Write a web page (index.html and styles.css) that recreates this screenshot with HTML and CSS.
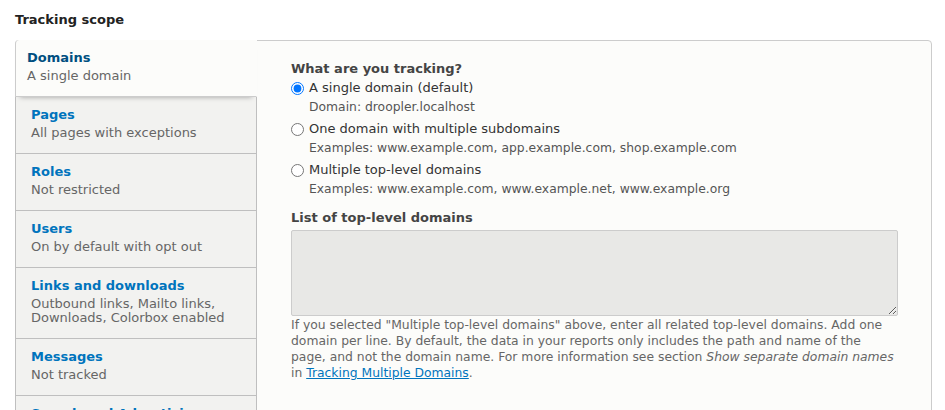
FILE: index.html
```html
<!DOCTYPE html>
<html lang="en">
<head>
    <meta charset="UTF-8">
    <meta name="viewport" content="width=device-width, initial-scale=1.0">
    <title>Tracking scope</title>
    <link rel="stylesheet" href="styles.css">
</head>
<body>
    <h4 class="scope-title">Tracking scope</h4>

    <div class="vtabs">
        <ul class="vtabs-menu">
            <li class="vtab is-selected">
                <a href="#">
                    <strong class="vtab-title">Domains</strong>
                    <span class="vtab-summary">A single domain</span>
                </a>
            </li>
            <li class="vtab">
                <a href="#">
                    <strong class="vtab-title">Pages</strong>
                    <span class="vtab-summary">All pages with exceptions</span>
                </a>
            </li>
            <li class="vtab">
                <a href="#">
                    <strong class="vtab-title">Roles</strong>
                    <span class="vtab-summary">Not restricted</span>
                </a>
            </li>
            <li class="vtab">
                <a href="#">
                    <strong class="vtab-title">Users</strong>
                    <span class="vtab-summary">On by default with opt out</span>
                </a>
            </li>
            <li class="vtab">
                <a href="#">
                    <strong class="vtab-title">Links and downloads</strong>
                    <span class="vtab-summary">Outbound links, Mailto links,<br>Downloads, Colorbox enabled</span>
                </a>
            </li>
            <li class="vtab">
                <a href="#">
                    <strong class="vtab-title">Messages</strong>
                    <span class="vtab-summary">Not tracked</span>
                </a>
            </li>
            <li class="vtab">
                <a href="#">
                    <strong class="vtab-title">Search and Advertising</strong>
                    <span class="vtab-summary">Site search enabled</span>
                </a>
            </li>
        </ul>

        <div class="vtabs-pane">
            <div class="field-label">What are you tracking?</div>

            <div class="radio-item">
                <label><input type="radio" name="domain_mode" checked> A single domain (default)</label>
                <div class="radio-desc">Domain: droopler.localhost</div>
            </div>
            <div class="radio-item">
                <label><input type="radio" name="domain_mode"> One domain with multiple subdomains</label>
                <div class="radio-desc">Examples: www.example.com, app.example.com, shop.example.com</div>
            </div>
            <div class="radio-item">
                <label><input type="radio" name="domain_mode"> Multiple top-level domains</label>
                <div class="radio-desc">Examples: www.example.com, www.example.net, www.example.org</div>
            </div>

            <div class="field-label list-label">List of top-level domains</div>
            <textarea class="domains-input" disabled></textarea>
            <div class="help">
                If you selected "Multiple top-level domains" above, enter all related top-level domains. Add one
                domain per line. By default, the data in your reports only includes the path and name of the
                page, and not the domain name. For more information see section <em>Show separate domain names</em>
                in <a href="#">Tracking Multiple Domains</a>.
            </div>
        </div>
    </div>
</body>
</html>
```

FILE: styles.css
```css
body {
    margin: 0;
    padding: 0 13px 0 15px;
    background: #fff;
    color: #333;
    font-family: "DejaVu Sans", sans-serif;
    font-size: 13px;
}

.scope-title {
    margin: 0;
    padding-top: 11px;
    height: 29px;
    font-size: 13px;
    line-height: 18px;
    color: #222;
}

.vtabs {
    border: 1px solid #ccc;
    border-radius: 4px;
    background: #fcfcfa;
    display: flex;
    align-items: flex-start;
}

.vtabs-menu {
    width: 242px;
    flex: none;
    margin: -1px 0 0 -1px;
    padding: 0;
    list-style: none;
}

.vtab {
    border: 1px solid #bfbfbf;
    border-top: 0;
    background: #f2f2f0;
}

.vtab a {
    display: block;
    padding: 9px 15px 13px;
    text-decoration: none;
}

.vtab-title {
    display: block;
    line-height: 17px;
    color: #0074bd;
}

.vtab-summary {
    display: block;
    margin-top: 3px;
    line-height: 14px;
    color: #666;
}

.vtab.is-selected {
    position: relative;
    background: #fcfcfa;
    border-color: #ccc;
    border-right-color: #fcfcfa;
    border-top-left-radius: 4px;
    box-shadow: 0 5px 5px -5px rgba(0, 0, 0, 0.35);
}

.vtab.is-selected a {
    padding-left: 11px;
}

.vtab.is-selected .vtab-title {
    color: #004f80;
}

.vtabs-pane {
    flex: 1;
    padding: 19px 20px 20px 34px;
}

.field-label {
    margin-bottom: 1px;
    font-weight: bold;
    line-height: 18px;
    color: #444;
}

.radio-item {
    margin-bottom: 3px;
}

.radio-item label {
    display: flex;
    align-items: center;
    line-height: 18px;
    color: #333;
}

.radio-item input {
    width: 13px;
    height: 13px;
    margin: 0 5px 0 0;
}

.radio-desc {
    padding-left: 18px;
    line-height: 20px;
    font-size: 12.35px;
    color: #555;
}

.list-label {
    margin-top: 10px;
    margin-bottom: 3px;
}

.domains-input {
    display: block;
    box-sizing: border-box;
    width: 607px;
    height: 86px;
    margin: 0 0 1px;
    border: 1px solid #ccc;
    border-radius: 2px;
    background: #e8e8e6;
}

.help {
    font-size: 12.35px;
    line-height: 16px;
    color: #666;
    max-width: 607px;
}

.help a {
    color: #0074bd;
}
```
